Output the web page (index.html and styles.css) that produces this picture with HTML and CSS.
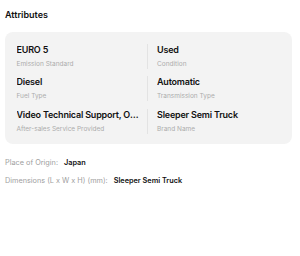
FILE: index.html
```html
<!DOCTYPE html>
<html>
<head>
<meta charset="utf-8">
<link rel="stylesheet" href="styles.css">
</head>
<body>
<div class="page">
  <h2 class="title">Attributes</h2>
  <div class="card">
    <div class="cell left">
      <div class="value">EURO 5</div>
      <div class="label">Emission Standard</div>
    </div>
    <div class="cell right">
      <div class="value">Used</div>
      <div class="label">Condition</div>
    </div>
    <div class="cell left">
      <div class="value">Diesel</div>
      <div class="label">Fuel Type</div>
    </div>
    <div class="cell right">
      <div class="value">Automatic</div>
      <div class="label">Transmission Type</div>
    </div>
    <div class="cell left">
      <div class="value">Video Technical Support, Online Support</div>
      <div class="label">After-sales Service Provided</div>
    </div>
    <div class="cell right">
      <div class="value">Sleeper Semi Truck</div>
      <div class="label">Brand Name</div>
    </div>
  </div>
  <div class="extra">
    <div class="row"><span class="k">Place of Origin:</span><span class="v">Japan</span></div>
    <div class="row"><span class="k">Dimensions (L x W x H) (mm):</span><span class="v">Sleeper Semi Truck</span></div>
  </div>
</div>
</body>
</html>
```
FILE: styles.css
```css
html, body {
  margin: 0;
  padding: 0;
  background: #fff;
}
body {
  font-family: Inter, "Noto Sans", sans-serif;
  color: #111;
}
.page {
  padding: 9px 8px 0 5px;
}
.title {
  margin: 0 0 11px 0;
  font-size: 9px;
  font-weight: 600;
  line-height: 12px;
  color: #111;
}
.card {
  background: #f3f3f3;
  border-radius: 8px;
  padding: 12px 11px 10px 11.5px;
  display: grid;
  grid-template-columns: 131.5px 1fr;
  row-gap: 7.3px;
}
.cell {
  min-width: 0;
}
.left {
  padding-right: 7px;
  border-right: 1px solid #e3e3e3;
}
.right {
  padding-left: 9px;
}
.value {
  font-size: 9px;
  font-weight: 600;
  line-height: 12px;
  letter-spacing: -0.2px;
  white-space: nowrap;
  overflow: hidden;
  text-overflow: ellipsis;
  color: #111;
}
.label {
  margin-top: 4px;
  font-size: 6.5px;
  line-height: 9px;
  color: #acacac;
  white-space: nowrap;
}
.extra {
  margin-top: 14px;
  display: flex;
  flex-direction: column;
  gap: 8.3px;
}
.row {
  font-size: 7.3px;
  line-height: 10px;
  display: flex;
  gap: 6px;
}
.k {
  color: #a0a0a0;
}
.v {
  color: #111;
  font-weight: 600;
}
```
